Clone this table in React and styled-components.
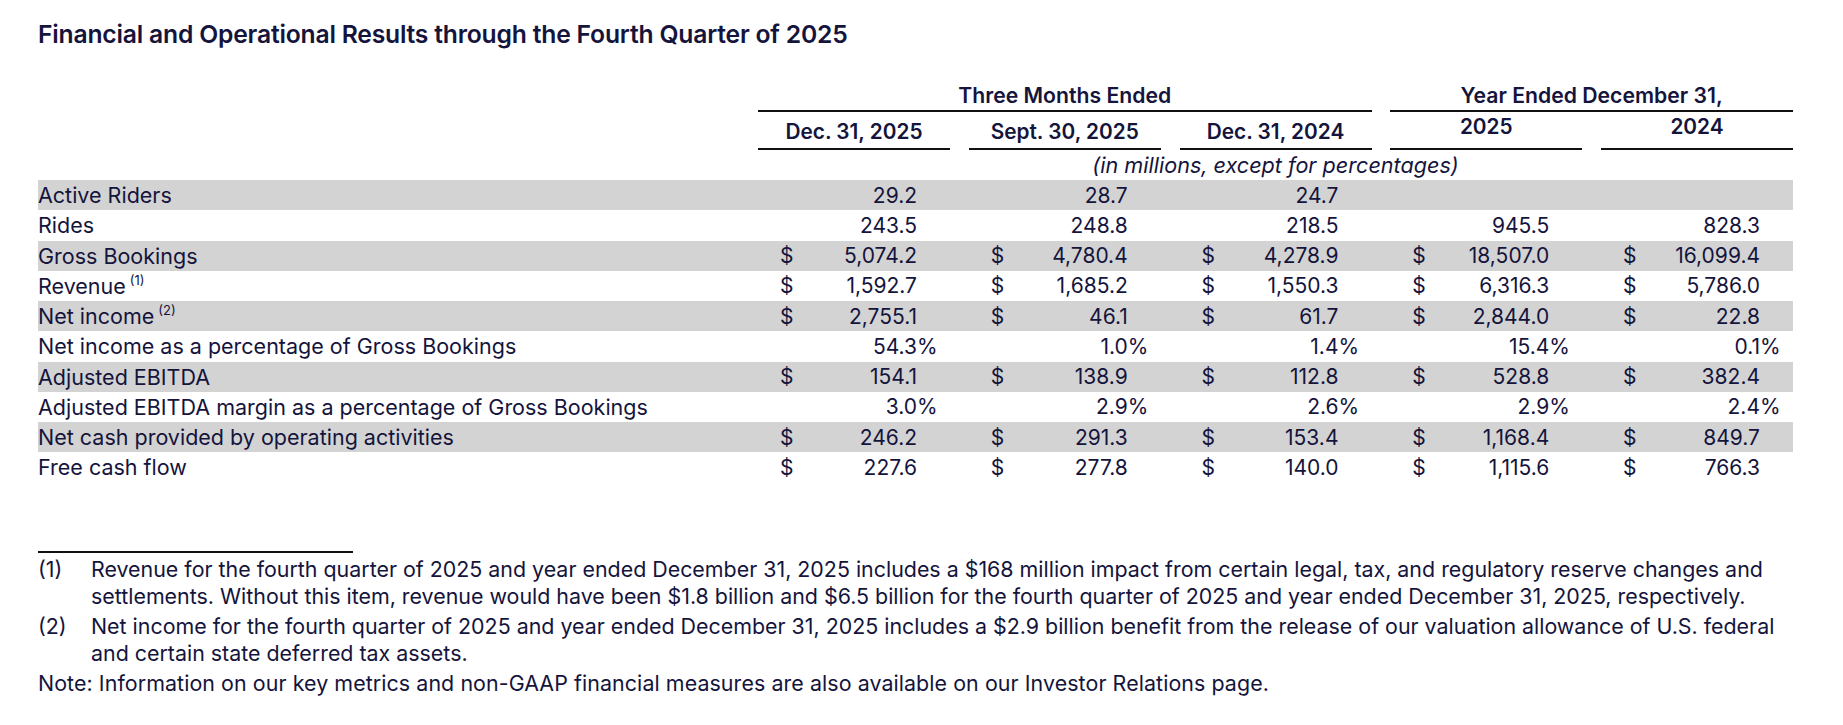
import React from "react";
import styled, { createGlobalStyle } from "styled-components";

const GlobalStyle = createGlobalStyle`
  body {
    margin: 0;
    background: #fff;
    color: #14143c;
    font-family: "Inter", "Liberation Sans", sans-serif;
  }
`;

const Page = styled.div`
  width: 1755px;
  padding: 20px 50px 0 38px;
`;

const Title = styled.h1`
  margin: 0;
  font-size: 24.7px;
  line-height: 28px;
  font-weight: 600;
  letter-spacing: -0.2px;
`;

const Table = styled.div`
  margin-top: 35px;
`;

const Row = styled.div`
  display: grid;
  grid-template-columns: 1fr repeat(5, 192px);
  column-gap: 18.75px;
  align-items: center;
  background: ${({ $shaded }) => ($shaded ? "#d3d3d3" : "transparent")};
  height: ${({ $height }) => $height || "auto"};
`;

const GroupHead = styled.div`
  grid-column: ${({ $span }) => $span};
  text-align: center;
  font-size: 21.2px;
  line-height: 24px;
  font-weight: 600;
  padding-bottom: 3px;
  border-bottom: 2px solid #111;
`;

const DateHead = styled.div`
  text-align: center;
  font-size: 20.8px;
  line-height: 24px;
  font-weight: 600;
  padding: ${({ $raised }) => ($raised ? "3px 0 9px" : "8px 0 4px")};
  border-bottom: 2px solid #111;
  align-self: stretch;
`;

const Units = styled.div`
  grid-column: 2 / 7;
  text-align: center;
  font-style: italic;
  font-size: 21.6px;
  line-height: 24px;
  margin: 3px 0;
`;

const Label = styled.div`
  font-size: 21.5px;
  white-space: nowrap;

  sup {
    font-size: 13px;
    vertical-align: 9px;
    line-height: 0;
    margin-left: 4px;
  }
`;

const Cell = styled.div`
  display: grid;
  grid-template-columns: 14px 1fr 18px;
  padding: 0 15px 0 22px;
  font-size: 21px;
`;

const Dollar = styled.span`
  text-align: left;
`;

const Num = styled.span`
  text-align: right;
`;

const Suffix = styled.span`
  text-align: left;
`;

const Notes = styled.div`
  margin-top: 68px;
  font-size: 21.4px;
  line-height: 27px;
`;

const Rule = styled.div`
  width: 315px;
  border-top: 2px solid #111;
  margin-bottom: 3px;
`;

const Note = styled.div`
  display: grid;
  grid-template-columns: 53px 1fr;
  margin-bottom: 3px;
`;

const Plain = styled.div`
  margin-top: 2px;
  letter-spacing: 0.08px;
`;

const rows = [
  { label: "Active Riders", vals: ["29.2", "28.7", "24.7", "", ""] },
  { label: "Rides", vals: ["243.5", "248.8", "218.5", "945.5", "828.3"] },
  { label: "Gross Bookings", dollar: true, vals: ["5,074.2", "4,780.4", "4,278.9", "18,507.0", "16,099.4"] },
  { label: "Revenue", note: "(1)", dollar: true, vals: ["1,592.7", "1,685.2", "1,550.3", "6,316.3", "5,786.0"] },
  { label: "Net income", note: "(2)", dollar: true, vals: ["2,755.1", "46.1", "61.7", "2,844.0", "22.8"] },
  { label: "Net income as a percentage of Gross Bookings", pct: true, vals: ["54.3", "1.0", "1.4", "15.4", "0.1"] },
  { label: "Adjusted EBITDA", dollar: true, vals: ["154.1", "138.9", "112.8", "528.8", "382.4"] },
  { label: "Adjusted EBITDA margin as a percentage of Gross Bookings", pct: true, vals: ["3.0", "2.9", "2.6", "2.9", "2.4"] },
  { label: "Net cash provided by operating activities", dollar: true, vals: ["246.2", "291.3", "153.4", "1,168.4", "849.7"] },
  { label: "Free cash flow", dollar: true, vals: ["227.6", "277.8", "140.0", "1,115.6", "766.3"] },
];

const heads = [
  { text: "Dec. 31, 2025" },
  { text: "Sept. 30, 2025" },
  { text: "Dec. 31, 2024" },
  { text: "2025", raised: true },
  { text: "2024", raised: true },
];

export default function App() {
  return (
    <>
      <GlobalStyle />
      <Page>
        <Title>Financial and Operational Results through the Fourth Quarter of 2025</Title>
        <Table>
          <Row>
            <div />
            <GroupHead $span="2 / 5">Three Months Ended</GroupHead>
            <GroupHead $span="5 / 7">Year Ended December 31,</GroupHead>
          </Row>
          <Row>
            <div />
            {heads.map((h) => (
              <DateHead key={h.text + h.raised} $raised={h.raised}>
                {h.text}
              </DateHead>
            ))}
          </Row>
          <Row>
            <div />
            <Units>(in millions, except for percentages)</Units>
          </Row>
          {rows.map((r, i) => (
            <Row key={r.label} $shaded={i % 2 === 0} $height="30.25px">
              <Label>
                {r.label}
                {r.note && <sup>{r.note}</sup>}
              </Label>
              {r.vals.map((v, j) => (
                <Cell key={j}>
                  <Dollar>{r.dollar && v ? "$" : ""}</Dollar>
                  <Num>{v}</Num>
                  <Suffix>{r.pct ? "%" : ""}</Suffix>
                </Cell>
              ))}
            </Row>
          ))}
        </Table>
        <Notes>
          <Rule />
          <Note>
            <span>(1)</span>
            <span>
              Revenue for the fourth quarter of 2025 and year ended December 31, 2025 includes a $168 million
              impact from certain legal, tax, and regulatory reserve changes and settlements. Without this item,
              revenue would have been $1.8 billion and $6.5 billion for the fourth quarter of 2025 and year ended
              December 31, 2025, respectively.
            </span>
          </Note>
          <Note>
            <span>(2)</span>
            <span>
              Net income for the fourth quarter of 2025 and year ended December 31, 2025 includes a $2.9 billion
              benefit from the release of our valuation allowance of U.S. federal and certain state deferred tax
              assets.
            </span>
          </Note>
          <Plain>
            Note: Information on our key metrics and non-GAAP financial measures are also available on our
            Investor Relations page.
          </Plain>
        </Notes>
      </Page>
    </>
  );
}
